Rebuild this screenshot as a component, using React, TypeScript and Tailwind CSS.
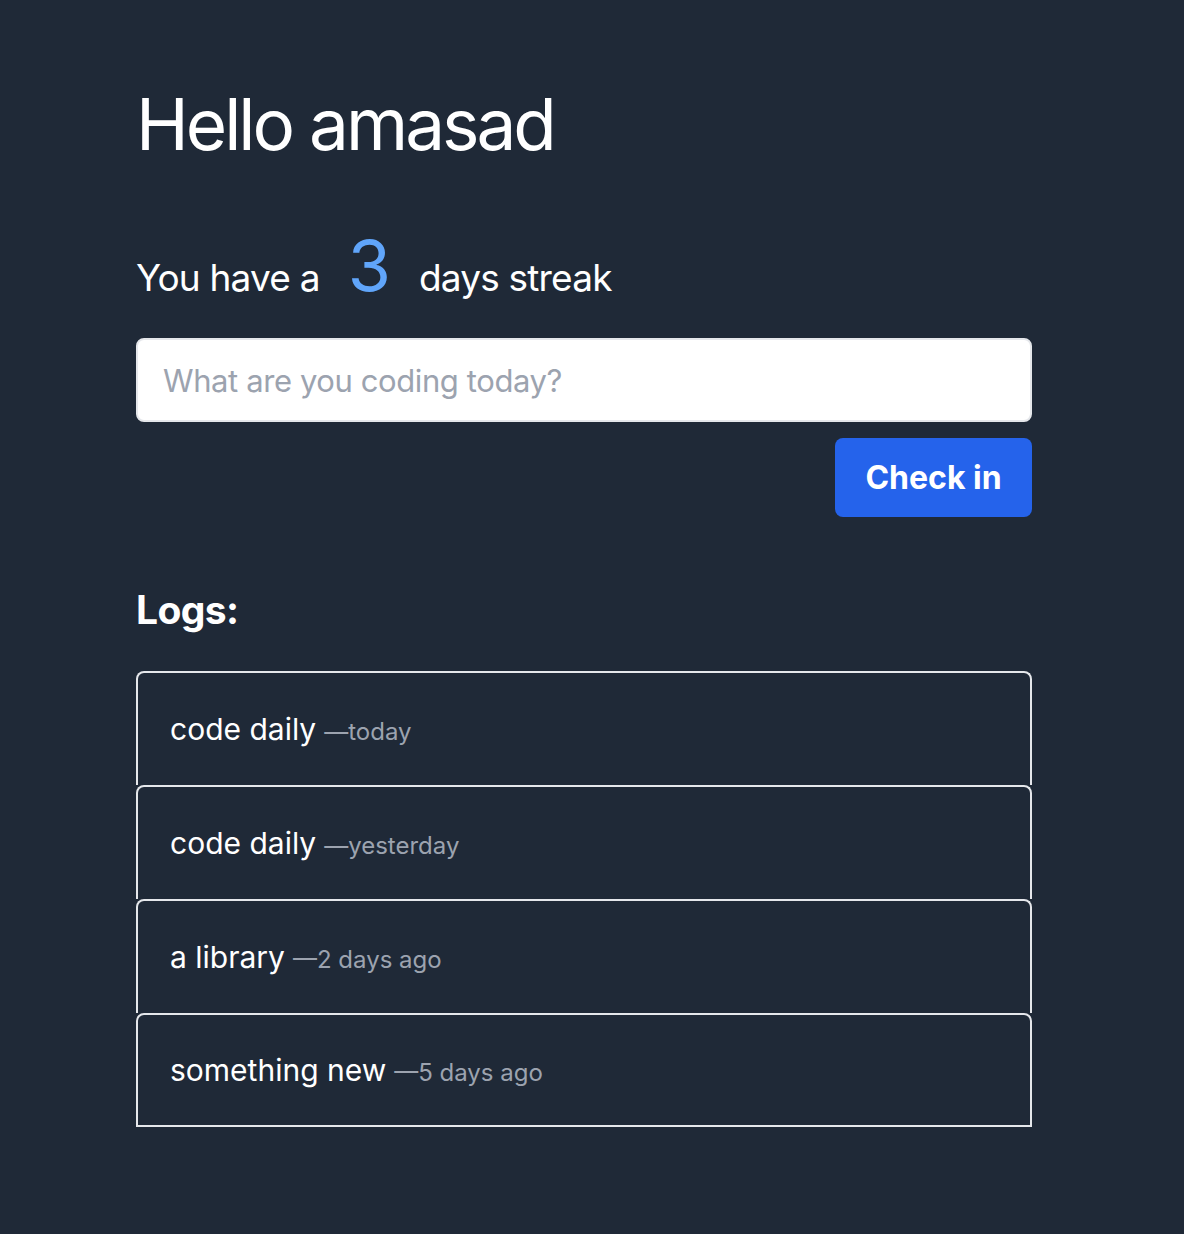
import { useState } from "react";

const logs = [
  { text: "code daily", when: "today" },
  { text: "code daily", when: "yesterday" },
  { text: "a library", when: "2 days ago" },
  { text: "something new", when: "5 days ago" },
];

export default function App() {
  const [entry, setEntry] = useState("");

  return (
    <div className="min-h-screen bg-[#1f2937] text-white font-['Inter','Liberation_Sans',sans-serif]">
      <div className="w-[896px] ml-[136px] pt-[88px]">
        {/* greeting */}
        <h1 className="text-[71px] leading-[72px] font-normal tracking-[-3px]">Hello amasad</h1>

        {/* streak */}
        <div className="mt-[70px] flex items-baseline gap-[28px]">
          <span className="text-[37px] leading-[48px] tracking-[-0.8px]">You have a</span>
          <span className="text-[70px] leading-[72px] font-normal text-[#60a5fa]">3</span>
          <span className="text-[37px] leading-[48px] tracking-[-0.8px]">days streak</span>
        </div>

        {/* check-in form */}
        <input
          type="text"
          value={entry}
          onChange={(e) => setEntry(e.target.value)}
          placeholder="What are you coding today?"
          className="mt-[36px] block w-full h-[84px] rounded-lg border-2 border-gray-200 bg-white px-[25px] text-[31px] tracking-[-0.4px] text-gray-900 placeholder:text-[#9ca3af] outline-none"
        />
        <div className="flex justify-end mt-[16px]">
          <button className="w-[197px] h-[79px] rounded-lg bg-[#2563eb] text-[32px] font-bold text-white">
            Check in
          </button>
        </div>

        {/* logs */}
        <h2 className="mt-[69px] text-[39px] leading-[48px] font-bold tracking-[-0.6px]">Logs:</h2>
        <ul className="mt-[37px]">
          {logs.map((log, i) => (
            <li
              key={i}
              className={
                "h-[114px] flex items-center px-[32px] rounded-t-lg border-x-2 border-t-2 border-gray-200 " +
                (i === logs.length - 1 ? "border-b-2" : "")
              }
            >
              <span className="text-[30px]">{log.text}</span>
              <span className="ml-[8px] text-[24px] text-[#9ca3af] mt-[6px]">—{log.when}</span>
            </li>
          ))}
        </ul>
      </div>
    </div>
  );
}
